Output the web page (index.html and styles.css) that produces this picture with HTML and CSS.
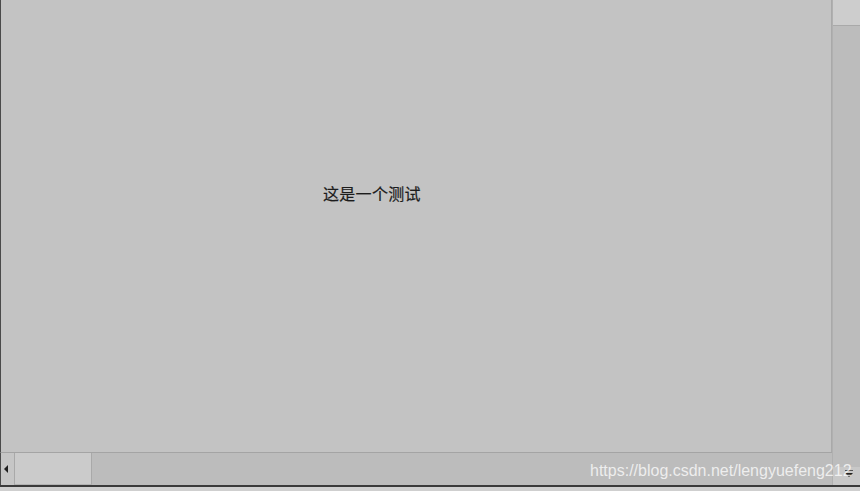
FILE: index.html
```html
<!DOCTYPE html>
<html lang="zh">
<head>
<meta charset="utf-8">
<link rel="stylesheet" href="styles.css">
</head>
<body>
<div class="window">
  <div class="body">
    <div class="left">
      <div class="canvas">
        <p class="label">这是一个测试</p>
      </div>
      <div class="hscroll">
        <div class="hbtn">
          <svg width="5" height="8" viewBox="0 0 5 8"><polygon points="4,0 0,4 4,8" fill="#1e1e1e"/></svg>
        </div>
        <div class="hthumb"></div>
        <div class="htrack"></div>
      </div>
    </div>
    <div class="vscroll">
      <div class="vthumb"></div>
      <div class="vtrack"></div>
      <div class="vbtn">
        <svg width="8" height="7" viewBox="0 0 8 7"><rect x="0" y="0" width="8" height="1" fill="#555"/><polygon points="0,3 8,3 4,7" fill="#222"/></svg>
      </div>
    </div>
  </div>
  <div class="bottom"></div>
  <div class="watermark">https://blog.csdn.net/lengyuefeng212</div>
</div>
</body>
</html>
```
FILE: styles.css
```css
* { box-sizing: border-box; }
html, body { margin: 0; padding: 0; }
body { background: #c9c9c9; }
.window {
  position: relative;
  width: 860px;
  height: 491px;
  display: flex;
  flex-direction: column;
  overflow: hidden;
  font-family: "Liberation Sans", "Noto Sans CJK SC", sans-serif;
}
.body {
  display: flex;
  height: 485px;
}
.left {
  width: 832px;
  display: flex;
  flex-direction: column;
}
.canvas {
  flex: 1;
  background: #c3c3c3;
  border-left: 1px solid #4a4a4a;
  border-right: 1px solid #a9a9a9;
  padding: 183px 0 0 322px;
}
.label {
  margin: 0;
  font-family: "Noto Sans CJK SC", sans-serif;
  font-size: 16px;
  line-height: 20px;
  letter-spacing: 0.3px;
  color: #1c1c1c;
  -webkit-text-stroke: 0.2px #1c1c1c;
}
.hscroll {
  height: 33px;
  display: flex;
  border-top: 1px solid #a4a4a4;
  border-left: 1px solid #4a4a4a;
  background: #bcbcbc;
}
.hbtn {
  width: 14px;
  display: flex;
  align-items: center;
  justify-content: center;
  background: #c6c6c6;
  border-right: 1px solid #a9a9a9;
  padding-right: 2px;
}
.hthumb {
  width: 77px;
  background: #cbcbcb;
  border-right: 1px solid #a9a9a9;
  border-bottom: 1px solid #b2b2b2;
}
.htrack { flex: 1; }
.vscroll {
  flex: 1;
  display: flex;
  flex-direction: column;
  background: #bcbcbc;
  border-left: 1px solid #b0b0b0;
}
.vthumb {
  height: 26px;
  background: #cdcdcd;
  border-bottom: 1px solid #a9a9a9;
}
.vtrack { flex: 1; }
.vbtn {
  height: 18px;
  background: #c8c8c8;
  display: flex;
  align-items: flex-start;
  justify-content: center;
  padding: 3px 0 0 4px;
}
.bottom {
  flex: 1;
  background: #cfcfcf;
  border-top: 2px solid #3a3a3a;
}
.watermark {
  position: absolute;
  left: 590px;
  top: 461px;
  font-size: 16px;
  line-height: 20px;
  color: rgba(255, 255, 255, 0.75);
  white-space: nowrap;
}
```
